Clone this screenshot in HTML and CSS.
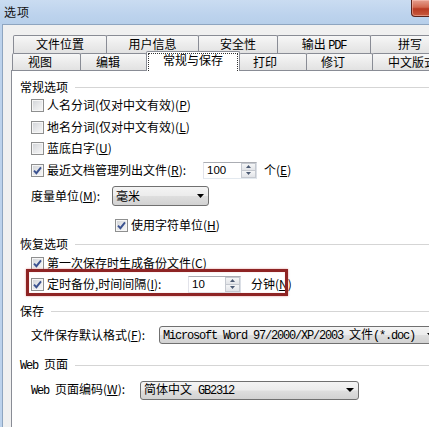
FILE: index.html
```html
<!DOCTYPE html>
<html lang="zh-CN">
<head>
<meta charset="utf-8">
<title>选项</title>
<link rel="stylesheet" href="styles.css">
</head>
<body>
<div class="window">
  <div class="titlebar">
    <span class="title">选项</span>
    <span class="close"></span>
  </div>
  <div class="frame">
    <div class="client">
      <div class="tabrow row1">
        <div class="tab w94">文件位置</div>
        <div class="tab w93">用户信息</div>
        <div class="tab w80">安全性</div>
        <div class="tab w94">输出 <span class="mono">PDF</span></div>
        <div class="tab w80">拼写</div>
      </div>
      <div class="tabrow row2">
        <div class="tab w69">视图</div>
        <div class="tab w67">编辑</div>
        <div class="tab w94 selected">常规与保存</div>
        <div class="tab w68 pad13">打印</div>
        <div class="tab w67 pad14">修订</div>
        <div class="tab w80">中文版式</div>
      </div>
      <div class="panel">
        <div class="group"><span>常规选项</span><span class="rule"></span></div>
        <div class="row"><span class="cb"></span><span>人名分词(仅对中文有效)(<u>P</u>)</span></div>
        <div class="row gap4"><span class="cb"></span><span>地名分词(仅对中文有效)(<u>L</u>)</span></div>
        <div class="row gap3"><span class="cb"></span><span>蓝底白字(<u>U</u>)</span></div>
        <div class="row gap4">
          <span class="cb"><svg width="11" height="11" viewBox="0 0 11 11"><path d="M2 5.6 4.4 8.2 9 2.4" fill="none" stroke="#3b5290" stroke-width="1.9"/></svg></span>
          <span class="lbl-recent">最近文档管理列出文件(<u>R</u>):</span>
          <span class="spin spin-recent"><span class="spin-val">100</span><span class="spin-btns"><span class="spin-btn"><svg width="5" height="3" viewBox="0 0 5 3"><path d="M0 3 2.5 0 5 3Z"/></svg></span><span class="spin-btn"><svg width="5" height="3" viewBox="0 0 5 3"><path d="M0 0 5 0 2.5 3Z"/></svg></span></span></span>
          <span class="unit-recent">个(<u>E</u>)</span>
        </div>
        <div class="row gap8">
          <span class="lbl-measure">度量单位(<u>M</u>):</span>
          <span class="combo combo-measure"><span>毫米</span><svg width="7" height="4" viewBox="0 0 7 4"><path d="M0 0 7 0 3.5 4Z"/></svg></span>
        </div>
        <div class="row gap11 row-char">
          <span class="cb"><svg width="11" height="11" viewBox="0 0 11 11"><path d="M2 5.6 4.4 8.2 9 2.4" fill="none" stroke="#3b5290" stroke-width="1.9"/></svg></span>
          <span>使用字符单位(<u>H</u>)</span>
        </div>
        <div class="group gap1"><span>恢复选项</span><span class="rule"></span></div>
        <div class="row gap1">
          <span class="cb"><svg width="11" height="11" viewBox="0 0 11 11"><path d="M2 5.6 4.4 8.2 9 2.4" fill="none" stroke="#3b5290" stroke-width="1.9"/></svg></span>
          <span>第一次保存时生成备份文件(<u>C</u>)</span>
        </div>
        <div class="row gap3">
          <span class="cb"><svg width="11" height="11" viewBox="0 0 11 11"><path d="M2 5.6 4.4 8.2 9 2.4" fill="none" stroke="#3b5290" stroke-width="1.9"/></svg></span>
          <span class="lbl-auto">定时备份,时间间隔(<u>I</u>):</span>
          <span class="spin spin-auto"><span class="spin-val">10</span><span class="spin-btns"><span class="spin-btn"><svg width="5" height="3" viewBox="0 0 5 3"><path d="M0 3 2.5 0 5 3Z"/></svg></span><span class="spin-btn"><svg width="5" height="3" viewBox="0 0 5 3"><path d="M0 0 5 0 2.5 3Z"/></svg></span></span></span>
          <span class="unit-auto">分钟(<u>N</u>)</span>
        </div>
        <div class="group gap9"><span>保存</span><span class="rule"></span></div>
        <div class="row gap6">
          <span class="lbl-format">文件保存默认格式(<u>F</u>):</span>
          <span class="combo combo-format"><span><span class="mono">Microsoft Word 97/2000/XP/2003 </span>文件<span class="mono">(*.doc)</span></span><svg width="7" height="4" viewBox="0 0 7 4"><path d="M0 0 7 0 3.5 4Z"/></svg></span>
        </div>
        <div class="group gap12"><span><span class="mono">Web </span>页面</span><span class="rule"></span></div>
        <div class="row gap7">
          <span class="lbl-web"><span class="mono">Web </span>页面编码(<u>W</u>):</span>
          <span class="combo combo-web"><span>简体中文<span class="mono"> GB2312</span></span><svg width="8" height="4" viewBox="0 0 8 4"><path d="M0 0 8 0 4 4Z"/></svg></span>
        </div>
        <div class="highlight"></div>
      </div>
    </div>
  </div>
</div>
</body>
</html>
```

FILE: styles.css
```css
* { box-sizing: border-box; }
html, body { margin: 0; padding: 0; }
body {
  width: 429px;
  height: 427px;
  overflow: hidden;
  font-family: "Noto Sans CJK SC", "Noto Sans", sans-serif;
  font-size: 12px;
  line-height: 16px;
  color: #000;
  background: #bcd2ec;
}
u { text-decoration: underline; text-underline-offset: 1px; }
.mono {
  font-family: "Liberation Mono", monospace;
  font-size: 12px;
  letter-spacing: -1.2px;
  white-space: pre;
}
.window {
  width: 429px;
  height: 427px;
  display: flex;
  flex-direction: column;
  overflow: hidden;
}
.titlebar {
  height: 24px;
  flex: none;
  display: flex;
  align-items: center;
  padding-left: 4px;
  background: linear-gradient(180deg, #cadcf1 0%, #bdd3ed 60%, #b7cfea 100%);
}
.title {
  font-size: 12px;
  letter-spacing: 1px;
  color: #111;
}
.close {
  align-self: flex-start;
  margin-left: auto;
  margin-right: -25px;
  width: 43px;
  height: 17px;
  border: 1px solid #5b241b;
  border-top: none;
  border-radius: 0 0 4px 4px;
  background: linear-gradient(180deg, #e6a090 0%, #d2684f 45%, #b83a22 55%, #c85a3e 100%);
  box-shadow: inset 0 0 0 1px rgba(255, 210, 200, 0.45);
}
.frame {
  flex: 1;
  min-height: 0;
  display: flex;
  padding-left: 2px;
  background: #bcd2ec;
}
.client {
  flex: 1;
  min-width: 0;
  display: flex;
  flex-direction: column;
  padding-top: 10px;
  background: #f0f0f0;
  border-top: 1px solid #8ea5c0;
  border-left: 1px solid #8ea5c0;
}
.tabrow {
  display: flex;
  flex: none;
}
.row1 { height: 18px; margin-left: 10px; }
.row2 { height: 17px; margin-left: 9px; }
.tab {
  flex: none;
  margin-right: -1px;
  border: 1px solid #898c95;
  border-bottom: none;
  border-radius: 2px 2px 0 0;
  background: linear-gradient(180deg, #f7f7f7 0%, #ececec 50%, #e2e2e2 100%);
  white-space: nowrap;
  line-height: 16px;
}
.row1 .tab { text-align: center; }
.row2 .tab { padding-left: 15px; }
.row2 .tab.pad13 { padding-left: 13px; }
.row2 .tab.pad14 { padding-left: 14px; }
.w67 { width: 67px; }
.w68 { width: 68px; }
.w69 { width: 69px; }
.w80 { width: 80px; }
.w93 { width: 93px; }
.w94 { width: 94px; }
.row2 .tab.selected {
  position: relative;
  z-index: 1;
  margin-top: -2px;
  margin-bottom: -1px;
  padding-left: 16px;
  background: #fff;
}
.selected::after {
  content: "";
  position: absolute;
  left: 1px;
  right: 1px;
  top: 1px;
  bottom: 0;
  border: 1px dotted #333;
  border-bottom: none;
}
.panel {
  flex: 1;
  position: relative;
  margin-left: 8px;
  padding-top: 7px;
  padding-left: 8px;
  background: #fff;
  border-top: 1px solid #898c95;
  border-left: 1px solid #898c95;
}
.group, .row {
  display: flex;
  align-items: center;
  height: 18px;
  white-space: nowrap;
}
.group { gap: 7px; }
.rule {
  flex: 1;
  height: 1px;
  background: #d5d5d5;
}
.row { padding-left: 11px; }
.row-char { padding-left: 95px; }
.gap1 { margin-top: 1px; }
.gap3 { margin-top: 3px; }
.gap4 { margin-top: 4px; }
.gap6 { margin-top: 6px; }
.gap7 { margin-top: 7px; }
.gap8 { margin-top: 8px; }
.gap9 { margin-top: 9px; }
.gap11 { margin-top: 11px; }
.gap12 { margin-top: 12px; }
.cb {
  flex: none;
  width: 13px;
  height: 13px;
  margin-right: 3px;
  border: 1px solid #8e8f8f;
  background: linear-gradient(135deg, #cfd2d6 0%, #e6e7e9 50%, #f8f8f8 100%);
  box-shadow: inset 0 0 0 1px #f6f6f6;
  display: flex;
}
.cb svg { display: block; }
.lbl-recent { width: 156px; flex: none; }
.lbl-measure { width: 81px; flex: none; }
.lbl-auto { width: 141px; flex: none; }
.lbl-format { width: 128px; flex: none; }
.lbl-web { width: 109px; flex: none; }
.unit-recent { margin-left: 7px; }
.unit-auto { margin-left: 10px; }
.spin {
  flex: none;
  display: flex;
  height: 17px;
  border: 1px solid;
  border-color: #abadb3 #dbdfe6 #e3e9ef #e2e3ea;
  background: #fff;
}
.spin-recent { width: 54px; }
.spin-auto { width: 53px; }
.spin-val {
  flex: 1;
  padding-left: 3px;
  font-family: "Liberation Sans", sans-serif;
  font-size: 11.5px;
  line-height: 15px;
}
.spin-btns {
  width: 15px;
  flex: none;
  display: flex;
  flex-direction: column;
}
.spin-btn {
  flex: 1;
  display: flex;
  align-items: center;
  justify-content: center;
  border: 1px solid #c5c9d0;
  background: linear-gradient(180deg, #f5f6f7 0%, #e2e4e8 100%);
}
.spin-btn + .spin-btn { border-top: none; }
.spin-btn svg { display: block; fill: #4c5a73; }
.combo {
  flex: none;
  display: flex;
  align-items: center;
  justify-content: space-between;
  padding: 0 4px 0 3px;
  border: 1px solid #707070;
  border-radius: 3px;
  background: linear-gradient(180deg, #f4f4f4 0%, #ececec 48%, #dedede 52%, #d2d2d2 100%);
  white-space: nowrap;
}
.combo svg { display: block; fill: #000; flex: none; }
.combo-measure { width: 97px; height: 20px; }
.combo-format { width: 280px; height: 18px; }
.combo-web { width: 219px; height: 19px; }
.highlight {
  position: absolute;
  left: 14px;
  top: 198px;
  width: 262px;
  height: 27px;
  border: 3px solid #8e2424;
  box-shadow: 0 0 2px rgba(200, 70, 70, 0.55), inset 0 0 1px rgba(200, 70, 70, 0.5);
}
```
